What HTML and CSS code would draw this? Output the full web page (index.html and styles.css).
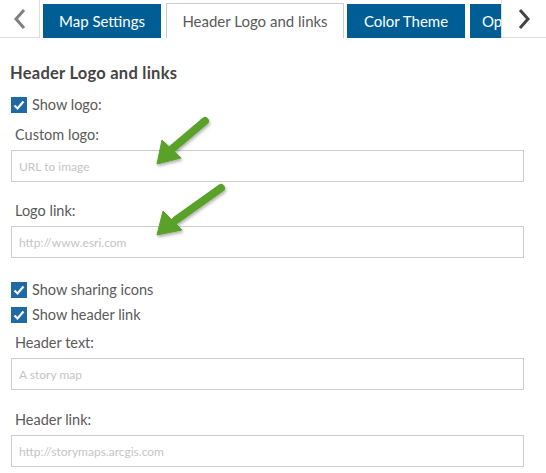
FILE: index.html
```html
<!DOCTYPE html>
<html>
<head>
<meta charset="utf-8">
<link rel="stylesheet" href="styles.css">
</head>
<body>
<div class="tabs">
  <div class="nav-btn nav-left">
    <svg width="14" height="22" viewBox="0 0 14 22"><path d="M11 2 L3 11 L11 20" fill="none" stroke="#808080" stroke-width="3"/></svg>
  </div>
  <div class="track">
    <div class="tab t-map">Map Settings</div>
    <div class="tab active t-header">Header Logo and links</div>
    <div class="tab t-color">Color Theme</div>
    <div class="tab t-opt">Options</div>
  </div>
  <div class="nav-btn nav-right">
    <svg width="14" height="22" viewBox="0 0 14 22"><path d="M3 2 L11 11 L3 20" fill="none" stroke="#444" stroke-width="3"/></svg>
  </div>
</div>

<div class="panel">
  <h2 class="title">Header Logo and links</h2>

  <div class="check row-logo">
    <span class="box"><svg width="16" height="16" viewBox="0 0 16 16"><path d="M3.5 8.5 L6.5 11.5 L12.5 4.5" fill="none" stroke="#fff" stroke-width="2.2"/></svg></span>
    <span>Show logo:</span>
  </div>
  <div class="label l-custom">Custom logo:</div>
  <div class="input">URL to image</div>

  <div class="label l-link">Logo link:</div>
  <div class="input">http://www.esri.com</div>

  <div class="check row-share">
    <span class="box"><svg width="16" height="16" viewBox="0 0 16 16"><path d="M3.5 8.5 L6.5 11.5 L12.5 4.5" fill="none" stroke="#fff" stroke-width="2.2"/></svg></span>
    <span>Show sharing icons</span>
  </div>
  <div class="check row-hlink">
    <span class="box"><svg width="16" height="16" viewBox="0 0 16 16"><path d="M3.5 8.5 L6.5 11.5 L12.5 4.5" fill="none" stroke="#fff" stroke-width="2.2"/></svg></span>
    <span>Show header link</span>
  </div>
  <div class="label l-htext">Header text:</div>
  <div class="input">A story map</div>

  <div class="label l-hlink">Header link:</div>
  <div class="input">http://storymaps.arcgis.com</div>
</div>

<svg class="arrows" width="546" height="473" viewBox="0 0 546 473">
  <defs>
    <filter id="sh" x="-30%" y="-30%" width="160%" height="160%">
      <feDropShadow dx="1" dy="2" stdDeviation="1.5" flood-color="#000" flood-opacity="0.3"/>
    </filter>
  </defs>
  <g filter="url(#sh)" fill="#5aa12b" stroke="#5aa12b">
    <line x1="205" y1="121" x2="172" y2="149" stroke-width="8" stroke-linecap="round"/>
    <polygon points="157,164 162,140 181,158" stroke-width="1" stroke-linejoin="round"/>
    <line x1="221" y1="188" x2="176" y2="220" stroke-width="8" stroke-linecap="round"/>
    <polygon points="157,235 163,211 182,230" stroke-width="1" stroke-linejoin="round"/>
  </g>
</svg>
</body>
</html>
```
FILE: styles.css
```css
html, body {
  margin: 0;
  padding: 0;
  background: #fff;
}
body {
  width: 546px;
  height: 473px;
  overflow: hidden;
  position: relative;
  font-family: "Lato", "Open Sans", sans-serif;
  color: #5a5a5a;
}
.tabs {
  display: flex;
  height: 38px;
}
.nav-btn {
  width: 40px;
  height: 38px;
  box-sizing: border-box;
  border: 1px solid #ddd;
  border-top: 0;
  display: flex;
  align-items: center;
  justify-content: center;
  background: #fff;
  flex: none;
}
.nav-left {
  border-left: 0;
}
.nav-right {
  width: 45px;
  border-right: 0;
}
.track {
  flex: 1;
  display: flex;
  align-items: flex-end;
  overflow: hidden;
  padding-left: 3px;
  gap: 4px;
}
.tab {
  flex: none;
  height: 34px;
  box-sizing: border-box;
  background: #005e95;
  color: #fff;
  font-size: 15px;
  display: flex;
  align-items: center;
  justify-content: center;
  white-space: nowrap;
}
.t-map { width: 118px; }
.t-header {
  width: 178px;
  height: 35px;
  margin-left: 1px;
  background: #fff;
  color: #5a5a5a;
  border: 1px solid #ccc;
  border-bottom: 0;
}
.t-color { width: 118px; margin-left: -1px; }
.t-opt { width: 80px; justify-content: flex-start; padding-left: 12px; margin-left: 1px; }

.panel {
  padding: 0 22px 0 10px;
}
.title {
  margin: 25px 0 0 0;
  font-size: 16.5px;
  line-height: 20px;
  letter-spacing: 0.25px;
  font-weight: bold;
  color: #454545;
}
.check {
  display: flex;
  align-items: center;
  gap: 5px;
  font-size: 14.5px;
  line-height: 18px;
  height: 18px;
}
.box {
  width: 16px;
  height: 16px;
  background: #1f6aa5;
  display: block;
  flex: none;
  margin-left: 1px;
}
.box svg { display: block; }
.row-logo { margin-top: 13px; }
.row-share { margin-top: 23px; }
.row-hlink { margin-top: 7px; }
.label {
  font-size: 14.5px;
  line-height: 18px;
  margin-left: 5px;
}
.l-custom { margin-top: 12px; }
.l-link { margin-top: 20px; }
.l-htext { margin-top: 10px; }
.l-hlink { margin-top: 21px; }
.input {
  margin-top: 6px;
  margin-left: 1px;
  height: 32px;
  box-sizing: border-box;
  border: 1px solid #ccc;
  padding-left: 7px;
  display: flex;
  align-items: center;
  font-size: 12px;
  color: #c4c4c4;
}
.arrows {
  position: absolute;
  left: 0;
  top: 0;
  pointer-events: none;
}
```
